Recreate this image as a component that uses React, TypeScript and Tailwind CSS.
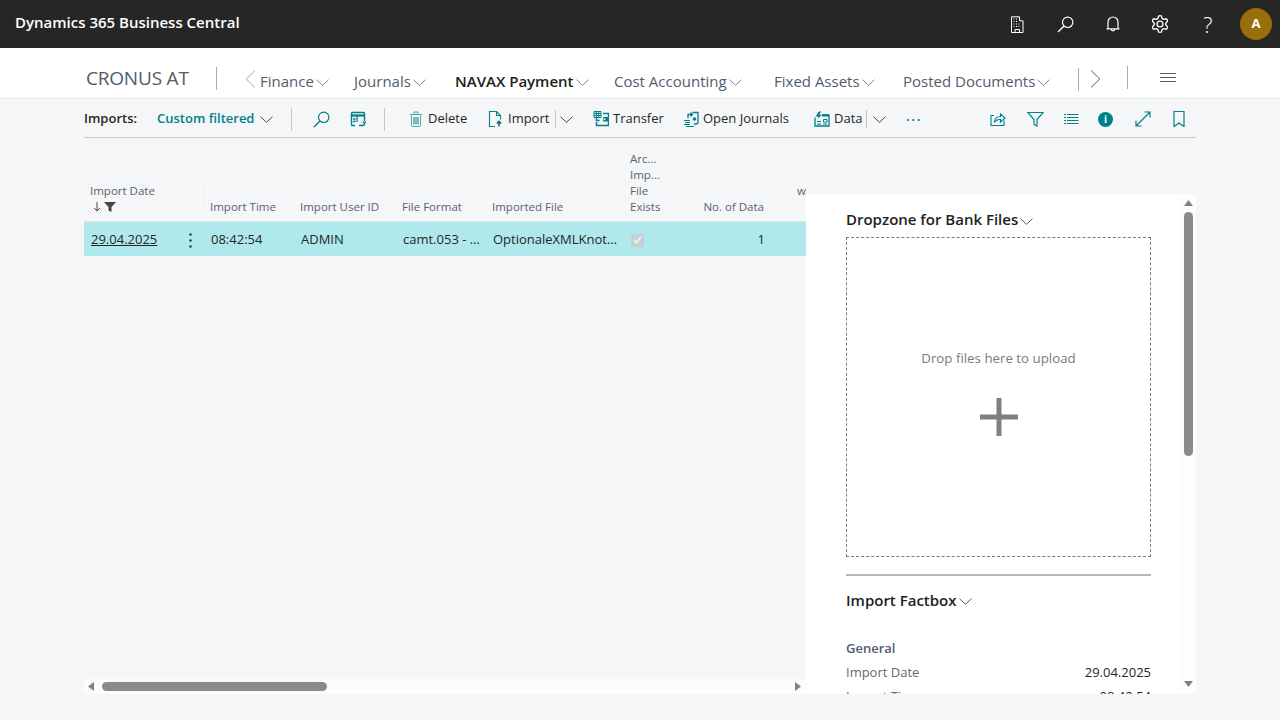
import React from "react";

const font = "font-['Open_Sans','Noto_Sans',sans-serif]";

function Chev({ className = "" }: { className?: string }) {
  return (
    <svg width="13" height="7" viewBox="0 0 13 7" fill="none" stroke="currentColor" strokeWidth="1" className={`shrink-0 ${className}`}>
      <path d="M.5.7 6.500 6.300 12.500.7" />
    </svg>
  );
}

function Glass({ className = "" }: { className?: string }) {
  return (
    <svg width="17" height="17" viewBox="0 0 17 17" fill="none" stroke="currentColor" strokeWidth="1.200" className={className}>
      <circle cx="10.700" cy="6.300" r="5.200" />
      <path d="M7 10 1 16" strokeWidth="1.500" />
    </svg>
  );
}

function TopIcons() {
  return (
    <div className="flex items-center text-white">
      <svg width="14" height="17" viewBox="0 0 14 17" fill="none" stroke="currentColor" className="mr-[33px]">
        <path d="M1.500 16.500V.8h8v4h3.500v11.700zM5 16.500v-3h4.500v3" />
        <path d="M3.500 3h1M6 3h1M3.500 5.500h1M6 5.500h1M3.500 8h1M6 8h1M8.500 8h1M3.500 10.500h1M6 10.500h1M8.500 10.500h1" />
      </svg>
      <Glass className="mr-[32px]" />
      <svg width="14" height="16" viewBox="0 0 14 16" fill="none" stroke="currentColor" strokeWidth="1.200" className="mr-[30px]">
        <path d="M2 12.500V6a5 5 0 0 1 10 0v6.500M.5 12.800h13M5.200 13a1.800 1.800 0 0 0 3.600 0" />
      </svg>
      <svg width="20" height="20" viewBox="0 0 24 24" fill="none" stroke="currentColor" strokeWidth="1.600" className="mr-[33px]">
        <path d="M12.220 2h-.44a2 2 0 0 0-2 2v.18a2 2 0 0 1-1 1.730l-.43.250a2 2 0 0 1-2 0l-.150-.080a2 2 0 0 0-2.730.730l-.220.380a2 2 0 0 0 .730 2.730l.150.100a2 2 0 0 1 1 1.720v.510a2 2 0 0 1-1 1.740l-.150.090a2 2 0 0 0-.730 2.730l.220.380a2 2 0 0 0 2.730.730l.150-.080a2 2 0 0 1 2 0l.430.250a2 2 0 0 1 1 1.730V20a2 2 0 0 0 2 2h.440a2 2 0 0 0 2-2v-.180a2 2 0 0 1 1-1.730l.430-.250a2 2 0 0 1 2 0l.150.080a2 2 0 0 0 2.730-.730l.220-.390a2 2 0 0 0-.730-2.730l-.150-.080a2 2 0 0 1-1-1.740v-.500a2 2 0 0 1 1-1.740l.150-.090a2 2 0 0 0 .730-2.730l-.220-.380a2 2 0 0 0-2.730-.730l-.150.080a2 2 0 0 1-2 0l-.430-.250a2 2 0 0 1-1-1.730V4a2 2 0 0 0-2-2z" />
        <circle cx="12" cy="12" r="3.500" />
      </svg>
      <span className="mr-[27px] w-[10px] text-center text-[22px] leading-none font-light">?</span>
      <span className="flex h-8 w-8 items-center justify-center rounded-full bg-[#986f0b] text-[13px] font-bold">A</span>
    </div>
  );
}

const navItems = [
  { label: "Journals", w: "w-[101px]" },
  { label: "NAVAX Payment", w: "w-[159px]", bold: true },
  { label: "Cost Accounting", w: "w-[160px]" },
  { label: "Fixed Assets", w: "w-[129px]" },
  { label: "Posted Documents", w: "w-[175px]" },
];

function Nav() {
  return (
    <nav className="flex h-[51px] items-center border-b border-[#e6e8eb] bg-white pl-[86px] text-[#505c6d]">
      <span className="mt-[10px] w-[130px] text-[19px] leading-none tracking-[-0.2px]">CRONUS AT</span>
      <span className="mt-[10px] h-[23px] w-px bg-[#a8adb3]" />
      <svg width="11" height="18" viewBox="0 0 11 18" fill="none" stroke="#a3a9b0" className="mt-[12px] mr-[4px] ml-[28px] shrink-0">
        <path d="M10 .5 1.200 9 10 17.500" />
      </svg>
      <div className="mt-[16px] flex w-[94px] items-center gap-[2px]">
        <span className="text-[15px]">Finance</span>
        <Chev className="mt-[2px] text-[#7f8894]" />
      </div>
      {navItems.map((n) => (
        <div key={n.label} className={`mt-[16px] flex items-center gap-[2px] ${n.w}`}>
          <span className={n.bold ? "text-[15px] font-semibold text-[#212121]" : "text-[15px]"}>{n.label}</span>
          <Chev className="mt-[2px] text-[#7f8894]" />
        </div>
      ))}
      <span className="mt-[12px] h-[23px] w-px bg-[#a8adb3]" />
      <svg width="11" height="18" viewBox="0 0 11 18" fill="none" stroke="#505c6d" className="mt-[11px] ml-[11px] shrink-0">
        <path d="M1 .5 9.800 9 1 17.500" />
      </svg>
      <span className="mt-[9px] ml-[26px] h-[23px] w-px bg-[#a8adb3]" />
      <svg width="16" height="10" viewBox="0 0 16 10" stroke="#505c6d" className="mt-[10px] ml-[32px]">
        <path d="M0 .5h16M0 4.500h16M0 8.500h16" />
      </svg>
    </nav>
  );
}

function ToolIcon({ kind }: { kind: string }) {
  const common = { width: 16, height: 16, viewBox: "0 0 16 16", fill: "none", stroke: "currentColor", className: "shrink-0 text-[#00808a]" };
  switch (kind) {
    case "columns":
      return (
        <svg {...common}>
          <path d="M5 14.500H2.500a1 1 0 0 1-1-1v-11a1 1 0 0 1 1-1h11a1 1 0 0 1 1 1V10" strokeWidth="1.400" />
          <path d="M2 4.500h12" strokeWidth="2.200" />
          <path d="M7 5v6M3 8h2.500M3 10.500h2.500M9 14.500h3.500a2 2 0 0 0 2-2M13 10.500l1.500 1.800 1.300-1.800" strokeWidth="1.300" />
        </svg>
      );
    case "delete":
      return (
        <svg {...common}>
          <path d="M3.500 4.500v10a1 1 0 0 0 1 1h7a1 1 0 0 0 1-1v-10M2 3.500h12M6 3V1h4v2" stroke="#4aa7ae" />
          <path d="M6 6v7.500M8 6v7.500M10 6v7.500" />
        </svg>
      );
    case "import":
      return (
        <svg {...common}>
          <path d="M7 15.500H1.500V.5h7l4 4v4M8.500.5v4h4" strokeWidth="1.100" />
          <path d="M11 15.500v-5M8.800 12.500 11 10.300l2.200 2.200" strokeWidth="1.500" stroke="#1d5f68" />
        </svg>
      );
    case "transfer":
      return (
        <svg {...common}>
          <path d="M1 .5h7v6H1zM1 2.500h7M1 4.500h7M3.300.5v6M5.700.5v6" strokeWidth="1" />
          <path d="M3.500 7v2.500h3M10 2.500h5.500v12H3.500V11" strokeWidth="1.500" />
          <path d="M10 6h5v4.500h-5z" fill="currentColor" stroke="none" />
          <circle cx="11.500" cy="8.200" r="1" fill="#f5f6f8" stroke="none" />
        </svg>
      );
    case "journals":
      return (
        <svg {...common}>
          <path d="M1 9.500h6M2 11.500h5M1 13.500h6M3 15.500h8" strokeWidth="1.200" />
          <path d="M5 7.500V3.500h4M7.500 1.500 9.500 3.500 7.500 5.500" strokeWidth="1.300" />
          <path d="M9.500 1.500H15V11a2 2 0 0 1-2 2h-2" strokeWidth="1.300" />
          <circle cx="11.500" cy="8" r="1.800" fill="currentColor" stroke="none" />
        </svg>
      );
    case "data":
      return (
        <svg {...common}>
          <path d="M1 6.500v8.500h14V4H8" strokeWidth="1.300" />
          <path d="M5 .5 1.500 5.500h3L3.500 8 8 3.800H5.300L7 .5z" fill="currentColor" stroke="none" />
          <path d="M8 4.500h7" strokeWidth="2" />
          <path d="M3 10.500h4M3 13h4M9.500 8.500h3.500v2.500H9.500zM9 13h4" />
        </svg>
      );
    case "share":
      return (
        <svg {...common}>
          <path d="M4 4.500H1v10h13V9.500" strokeWidth="1.100" />
          <path d="M4.500 11c.3-3.500 3-5.500 6-5.500V3l4.500 4-4.500 4V8.300c-2.500 0-4.500 1-6 2.700z" strokeWidth="1.100" />
        </svg>
      );
    case "filter":
      return (
        <svg {...common} width={17} viewBox="0 0 17 16">
          <path d="M.7 1.500h15.600L10 8.500V15l-3-1.500v-5z" strokeWidth="1.200" />
        </svg>
      );
    case "list":
      return (
        <svg {...common}>
          <path d="M1 3.500h2M4 3.500h11.500M1 6.500h2M4 6.500h11.500M1 9.500h2M4 9.500h11.500M1 12.500h2M4 12.500h11.500" />
        </svg>
      );
    case "info":
      return (
        <span className="flex h-[15px] w-[15px] shrink-0 items-center justify-center rounded-full bg-[#00808a] text-[10px] leading-none font-bold text-white">i</span>
      );
    case "expand":
      return (
        <svg {...common}>
          <path d="M1.500 14.500 14.500 1.500M9.500 1h5.500v5.500M1 9.500V15h5.500" strokeWidth="1.200" />
        </svg>
      );
    default:
      return (
        <svg {...common} width={12} viewBox="0 0 12 16">
          <path d="M1 .5h10v15L6 12 1 15.500z" strokeWidth="1.200" />
        </svg>
      );
  }
}

function Action({ icon, label, w }: { icon: string; label: string; w: string }) {
  return (
    <div className={`flex items-center gap-[4px] ${w}`}>
      <ToolIcon kind={icon} />
      <span className="text-[13px] whitespace-nowrap text-[#262626]">{label}</span>
    </div>
  );
}

function Toolbar() {
  return (
    <div className="mx-[84px] flex h-[39px] items-center border-b border-[#c8cacd] pt-[2px] text-[13px]">
      <span className="w-[73px] font-semibold text-[#262626]">Imports:</span>
      <span className="w-[103px] font-semibold text-[#00808a]">Custom filtered</span>
      <Chev className="text-[#404a55]" />
      <span className="ml-[18px] h-[23px] w-px bg-[#c4c7ca]" />
      <Glass className="ml-[21px] text-[#00808a]" />
      <span className="ml-[20px]"><ToolIcon kind="columns" /></span>
      <span className="mr-[23px] ml-[18px] h-[23px] w-px bg-[#c4c7ca]" />
      <Action icon="delete" label="Delete" w="w-[80px]" />
      <Action icon="import" label="Import" w="w-[67px]" />
      <span className="h-[18px] w-px bg-[#c4c7ca]" />
      <Chev className="mr-[20px] ml-[4px] text-[#404a55]" />
      <Action icon="transfer" label="Transfer" w="w-[90px]" />
      <Action icon="journals" label="Open Journals" w="w-[131px]" />
      <Action icon="data" label="Data" w="w-[52px]" />
      <span className="h-[18px] w-px bg-[#c4c7ca]" />
      <Chev className="ml-[6px] text-[#404a55]" />
      <span className="mb-[6px] ml-[20px] text-[14px] leading-none font-semibold tracking-[1.500px] text-[#00808a]">...</span>
      <div className="ml-auto flex items-center pr-[11px]">
        <ToolIcon kind="share" />
        <span className="ml-[21px]"><ToolIcon kind="filter" /></span>
        <span className="ml-[19px]"><ToolIcon kind="list" /></span>
        <span className="ml-[19px]"><ToolIcon kind="info" /></span>
        <span className="ml-[22px]"><ToolIcon kind="expand" /></span>
        <span className="ml-[22px]"><ToolIcon kind="bookmark" /></span>
      </div>
    </div>
  );
}

const cols = "grid grid-cols-[120px_90px_102px_90px_138px_60px_86px_36px]";

function ImportTable() {
  return (
    <div className="flex h-[556px] w-[722px] shrink-0 flex-col overflow-hidden bg-[#f5f6f8]">
      <div className={`${cols} h-[84px] items-end border-b border-[#dfe1e3] pb-[6px] text-[11.500px] leading-[16px] text-[#58626f]`}>
        <div className="border-r border-[#f0f1f3] pl-[6px]">
          <div>Import Date</div>
          <div className="flex h-[16px] items-center gap-[3px] pl-[3px] text-[#444]">
            <svg width="8" height="10" viewBox="0 0 8 10" fill="none" stroke="currentColor"><path d="M4 0v9M1 6l3 3 3-3" /></svg>
            <svg width="12" height="10" viewBox="0 0 12 10" fill="currentColor"><path d="M0 0h12L7.500 5v5l-3-1.500V5z" /></svg>
          </div>
        </div>
        <div className="pl-[6px]">Import Time</div>
        <div className="pl-[6px]">Import User ID</div>
        <div className="pl-[6px]">File Format</div>
        <div className="pl-[6px]">Imported File</div>
        <div className="pl-[6px]">
          <div>Arc...</div>
          <div>Imp...</div>
          <div>File</div>
          <div>Exists</div>
        </div>
        <div className="pr-[6px] text-right whitespace-nowrap">No. of Data</div>
        <div className="mb-[16px] pl-[27px]">w</div>
      </div>
      <div className={`${cols} h-[34px] items-center bg-[#b0e9ec] pt-[2px] text-[13px] text-[#262626]`}>
        <div className="flex items-center justify-between pr-[12px] pl-[7px]">
          <span className="underline">29.04.2025</span>
          <svg width="3" height="15" viewBox="0 0 3 15" fill="#333"><circle cx="1.500" cy="1.500" r="1.200" /><circle cx="1.500" cy="7.500" r="1.200" /><circle cx="1.500" cy="13.500" r="1.200" /></svg>
        </div>
        <div className="pl-[7px]">08:42:54</div>
        <div className="pl-[7px]">ADMIN</div>
        <div className="truncate pr-[4px] pl-[7px]">camt.053 - Bank</div>
        <div className="truncate pr-[4px] pl-[7px]">OptionaleXMLKnoten.xml</div>
        <div className="pl-[7px]">
          <span className="flex h-[13px] w-[13px] items-center justify-center rounded-[2px] bg-[#c4d0d1]">
            <svg width="9" height="8" viewBox="0 0 9 8" fill="none" stroke="#eef3f3" strokeWidth="1.700"><path d="M1 4l2.500 2.500L8 1" /></svg>
          </span>
        </div>
        <div className="pr-[5px] text-right">1</div>
        <div />
      </div>
      <div className="flex-1" />
      <div className="flex h-[15px] items-center bg-[#fcfcfc] pl-[4px]">
        <svg width="6" height="9" viewBox="0 0 6 9" fill="#808080"><path d="M6 0v9L0 4.500z" /></svg>
        <span className="ml-[8px] h-[9px] w-[225px] rounded-full bg-[#8a8a8a]" />
        <svg width="6" height="9" viewBox="0 0 6 9" fill="#808080" className="mr-[5px] ml-auto"><path d="M0 0v9l6-4.500z" /></svg>
      </div>
    </div>
  );
}

function Factbox() {
  return (
    <aside className="mt-[56px] flex h-[500px] w-[390px] shrink-0 overflow-hidden bg-white">
      <div className="w-[375px] shrink-0 pr-[30px] pl-[40px]">
        <div className="flex h-[43px] items-end gap-[2px] pb-[7px]">
          <span className="text-[15px] leading-[22px] font-semibold text-[#212121]">Dropzone for Bank Files</span>
          <Chev className="mb-[5px] text-[#505c6d]" />
        </div>
        <div className="flex h-[320px] flex-col items-center border border-dashed border-[#7b7b7b] pt-[110px]">
          <span className="text-[13.300px] leading-[20px] text-[#7a7a7a]">Drop files here to upload</span>
          <svg width="38" height="38" viewBox="0 0 38 38" fill="#808080" className="mt-[30px]"><path d="M16.500 0h5v16.500H38v5H21.500V38h-5V21.500H0v-5h16.500z" /></svg>
        </div>
        <div className="mt-[17px] h-[2px] bg-[#b5b9bd]" />
        <div className="mt-[13px] flex h-[22px] items-center gap-[2px]">
          <span className="text-[15px] font-semibold text-[#212121]">Import Factbox</span>
          <Chev className="mt-[2px] text-[#505c6d]" />
        </div>
        <div className="mt-[25px] text-[13px] leading-[24px]">
          <div className="font-semibold text-[#505c6d]">General</div>
          <div className="flex justify-between"><span className="text-[#626c79]">Import Date</span><span className="text-[#262626]">29.04.2025</span></div>
          <div className="flex justify-between"><span className="text-[#626c79]">Import Time</span><span className="text-[#262626]">08:42:54</span></div>
        </div>
      </div>
      <div className="flex w-[15px] shrink-0 flex-col items-center bg-[#fdfdfd] pt-[6px] pr-[3px] pl-[3px]">
        <svg width="9" height="6" viewBox="0 0 9 6" fill="#808080" className="shrink-0"><path d="M4.500 0 9 6H0z" /></svg>
        <span className="mt-[6px] h-[244px] w-[9px] shrink-0 rounded-full bg-[#8a8a8a]" />
        <svg width="9" height="6" viewBox="0 0 9 6" fill="#808080" className="mt-auto mb-[7px] shrink-0"><path d="M0 0h9L4.500 6z" /></svg>
      </div>
    </aside>
  );
}

export default function App() {
  return (
    <div className={`h-[720px] w-[1280px] overflow-hidden bg-[#f5f6f8] ${font}`}>
      <header className="flex h-12 items-center justify-between bg-[#262626] pr-[8px] pl-[15px]">
        <span className="pb-[4px] text-[15px] font-semibold text-white">Dynamics 365 Business Central</span>
        <TopIcons />
      </header>
      <Nav />
      <Toolbar />
      <div className="mx-[84px] flex">
        <ImportTable />
        <Factbox />
      </div>
    </div>
  );
}
